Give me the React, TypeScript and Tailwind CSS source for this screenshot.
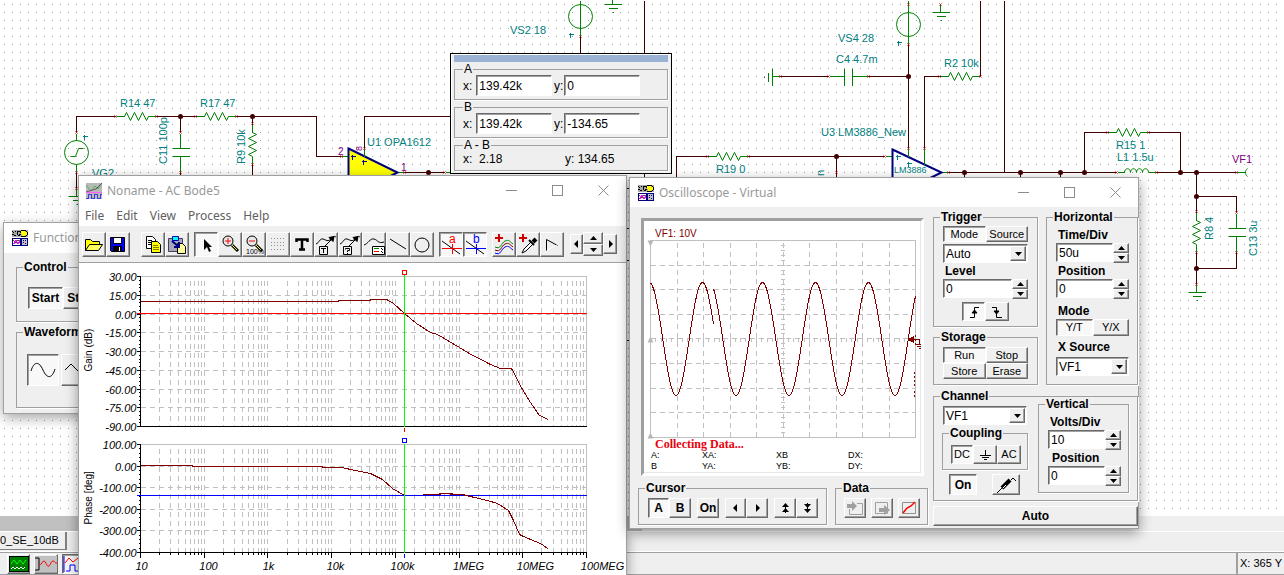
import React, { useId } from "react";
import clsx from "clsx";

const RAISED =
  "border border-t-white border-l-white border-r-[#696969] border-b-[#696969] shadow-[inset_-1px_-1px_0_#a0a0a0] bg-[#efefef]";
const SUNKEN =
  "border border-t-[#696969] border-l-[#696969] border-r-white border-b-white shadow-[inset_1px_1px_0_#a0a0a0]";

/* ---------- shared controls ---------- */

type BtnProps = {
  pressed?: boolean;
  className?: string;
  label?: string;
  children?: React.ReactNode;
};

const Btn = ({ pressed, className, label, children }: BtnProps) => (
  <button
    type="button"
    aria-label={label}
    aria-pressed={pressed}
    className={clsx(
      "flex items-center justify-center overflow-hidden whitespace-nowrap",
      pressed ? [SUNKEN, "bg-[#f8f8f8]"] : RAISED,
      className
    )}
  >
    {children}
  </button>
);

type GroupProps = {
  title: string;
  className?: string;
  legendClass?: string;
  children: React.ReactNode;
};

const Group = ({ title, className, legendClass, children }: GroupProps) => (
  <fieldset className={clsx("min-w-0 border border-[#a0a0a0] shadow-[1px_1px_0_#fff]", className)}>
    <legend className={clsx("leading-3 px-px", legendClass ?? "ml-1.5 text-xs font-bold")}>
      {title}
    </legend>
    {children}
  </fieldset>
);

const Arrow = ({ dir }: { dir: "up" | "down" | "left" | "right" }) => {
  const d = {
    up: "M0 6h7L3.5 2z",
    down: "M0 2h7L3.5 6z",
    left: "M5 0v8L1 4z",
    right: "M2 0v8L6 4z",
  }[dir];
  return (
    <svg width="7" height="8" viewBox="0 0 7 8" className="shrink-0">
      <path d={d} />
    </svg>
  );
};

const Spin = ({ label, value, indent }: { label: string; value: string; indent?: string }) => {
  const id = useId();
  return (
    <div>
      <label htmlFor={id} className={clsx("block h-4 text-xs leading-4 font-bold", indent ?? "pl-1")}>
        {label}
      </label>
      <div className="flex h-5">
        <input
          id={id}
          defaultValue={value}
          className={clsx("h-[19px] w-full min-w-0 flex-1 bg-white px-0.5 text-xs", SUNKEN)}
        />
        <div className="flex w-4 shrink-0 flex-col">
          <Btn label={`${label} up`} className="h-2.5">
            <Arrow dir="up" />
          </Btn>
          <Btn label={`${label} down`} className="h-2.5">
            <Arrow dir="down" />
          </Btn>
        </div>
      </div>
    </div>
  );
};

const Drop = ({ label, value, options }: { label: string; value: string; options: string[] }) => (
  <div className={clsx("relative h-[19px] bg-white", SUNKEN)}>
    <select
      aria-label={label}
      defaultValue={value}
      className="block h-full w-full appearance-none bg-transparent pr-4 pl-0.5 text-xs leading-4"
    >
      {options.map((o) => (
        <option key={o}>{o}</option>
      ))}
    </select>
    <span
      className={clsx(
        "pointer-events-none absolute inset-y-px right-px flex w-4 items-center justify-center",
        RAISED
      )}
    >
      <Arrow dir="down" />
    </span>
  </div>
);

const WindowButtons = () => (
  <div className="ml-auto flex h-full text-[#8c8c8c]">
    <button type="button" aria-label="Minimize" className="flex w-[46px] items-center justify-center">
      <svg width="11" height="11" stroke="currentColor" shapeRendering="crispEdges">
        <path d="M0 5.5h11" />
      </svg>
    </button>
    <button type="button" aria-label="Maximize" className="flex w-[46px] items-center justify-center">
      <svg width="11" height="11" stroke="currentColor" fill="none" shapeRendering="crispEdges">
        <path d="M.5.5h10v10h-10z" />
      </svg>
    </button>
    <button type="button" aria-label="Close" className="flex w-[46px] items-center justify-center">
      <svg width="11" height="11" stroke="currentColor">
        <path d="M.5.5l10 10M10.500.5l-10 10" />
      </svg>
    </button>
  </div>
);

const InstrumentIcon = () => (
  <svg width="16" height="16" viewBox="0 0 16 16" shapeRendering="crispEdges" className="shrink-0">
    <path d="M0 0h16v7H0z" fill="#a8a8a8" />
    <path d="M0 1h1v1H0zM1 2h1v1H1zM0 4h2v1H0zM2 5h2v1H2zM3 1h1v1H3zM5 1h3v1H5zM5 2h1v3H5zM7 4h2v1H7zM8 2h1v1H8zM6 5h2v1H6z" />
    <path d="M9 1h4v1h2v3h-2v1h-3z" fill="#ff0" />
    <path d="M9 0h5v1H9zM14 1h1v1h-1zM15 2h1v3h-1zM9 6h5v1H9zM14 5h1v1h-1zM8 1h1v1H8z" />
    <path d="M0 8h16v8H0z" fill="#000080" />
    <path d="M1 9h7v6H1z" fill="#fff" />
    <path d="M1 13h1v-2h1v-1h1v2h1v1h1v-1h1v-2h1" stroke="#f0f" fill="none" />
    <path d="M1 10.500h1M3 12.500h2M5 10.500h2" stroke="#008000" />
    <path d="M10 9h5v6h-5z" fill="#c0c0c0" />
    <path d="M11 10h1v1h-1zM13 10h1v1h-1zM11 12h1v1h-1zM13 13h1v1h-1z" fill="#000080" />
  </svg>
);

/* ---------- schematic ---------- */

const G = "#008000";
const W = "#400000";

const Res = ({ x, y, vertical }: { x: number; y: number; vertical?: boolean }) => (
  <g transform={`translate(${x} ${y})${vertical ? " rotate(90)" : ""}`} fill="none">
    <path d="M-8 0H0M24 0h8" stroke={G} shapeRendering="crispEdges" />
    <path d="M0 0l2-4 4 8 4-8 4 8 4-8 4 8 2-4" stroke={G} />
    <path d="M-10-1l2 2m0-2l-2 2M31-1l2 2m0-2l-2 2" stroke="#d00000" />
  </g>
);

const Ground = ({ x, y, rotate = 0 }: { x: number; y: number; rotate?: number }) => (
  <path
    transform={`translate(${x} ${y}) rotate(${rotate})`}
    d="M0-8V0M-8 0h17M-4 4h9M0 8h1"
    stroke={G}
    shapeRendering="crispEdges"
  />
);

const junctions = [
  [180, 116], [252, 116], [428, 172], [836, 156], [908, 76], [964, 172], [1020, 172],
  [1060, 172], [1084, 172], [1180, 172], [1196, 172], [1196, 196], [1196, 268],
];

const pins = [
  [76, 132], [76, 172], [76, 188], [180, 132], [180, 172], [341, 156], [364, 148], [404, 172],
  [444, 172], [580, 36], [780, 76], [828, 76], [868, 76], [908, 4], [908, 44], [940, 4], [908, 148],
  [924, 148], [884, 156], [948, 172], [1116, 172], [1156, 172], [1236, 172], [1236, 212],
  [1236, 252], [1196, 284], [836, 172],
];

const labels: [number, number, string][] = [
  [120, 107, "R14 47"], [200, 107, "R17 47"], [367, 146, "U1 OPA1612"], [92, 177, "VG2"],
  [510, 34, "VS2 18"], [838, 42, "VS4 28"], [836, 63, "C4 4.7m"], [944, 67, "R2 10k"],
  [821, 136, "U3 LM3886_New"], [716, 173, "R19 0"], [1116, 149, "R15 1"], [1117, 161, "L1 1.5u"],
];

const verticalLabels: [number, number, string][] = [
  [167, 164, "C11 100p"], [245, 164, "R9 10k"], [1213, 240, "R8 4"], [1257, 256, "C13 3u"],
  [824, 176, "n"],
];

const Schematic = () => (
  <svg className="absolute inset-0 h-full w-full" fontFamily="Liberation Sans, Arial, sans-serif" fontSize="11">
    <defs>
      <pattern id="dots" width="8" height="8" patternUnits="userSpaceOnUse">
        <path d="M4 4h1v1H4z" fill="#a0a0a0" />
      </pattern>
    </defs>
    <rect width="100%" height="100%" fill="url(#dots)" />
    <g transform="translate(.5 .5)">
      <g fill="none" stroke={W} shapeRendering="crispEdges">
        <path d="M76 132V116H115M156 116H196M236 116H316V156H340M76 172V188M180 116V132M180 172V180M252 116V124M252 164V180" />
        <path d="M364 148V116H452M404 172H444M580 36V54M644 0V180M676 180V156H708M748 156H884M836 156V180" />
        <path d="M780 76H828M868 76H908M908 44V148M924 148V76H940M980 0V76M1004 0V172" />
        <path d="M948 172H1116M1084 172V132H1108M1148 132H1180V172M1156 172H1236M964 172v8M1020 172v8M1060 172v8" />
        <path d="M1196 172V212M1196 196H1236V212M1236 252V268H1196M1196 252V284M620 188h12M620 228h12M620 260h12M620 340h12" />
      </g>
      <g fill="none" stroke={G} shapeRendering="crispEdges">
        <path d="M76 133V140M76 164V172M180 133V148M172 148H189M172 156H189M180 156V172" />
        <path d="M341 156h7M364 148v9M397 172h7M445 172h8M580 0V35M908 0V44M772 76h8" />
        <path d="M829 76H844M844 68V85M852 68V85M852 76H868M885 156h7M908 148v8M924 148v16M941 172h7" />
        <path d="M1117 172h7M1148 172h8M1236 172h9M1236 213V228M1228 228H1245M1228 236H1245M1236 236V252" />
      </g>
      <g fill="none" stroke={G}>
        <circle cx="76" cy="152" r="12" />
        <path d="M70 156h5l3-8h5" />
        <circle cx="580" cy="16" r="12" />
        <circle cx="908" cy="24" r="12" />
        <path d="M1124 172c0-5 6-5 6 0c0-5 6-5 6 0c0-5 6-5 6 0c0-5 6-5 6 0M1247 168c-3 3-3 5 0 8" />
      </g>
      <Res x={124} y={116} />
      <Res x={204} y={116} />
      <Res x={252} y={132} vertical />
      <Res x={716} y={156} />
      <Res x={948} y={76} />
      <Res x={1116} y={132} />
      <Res x={1196} y={220} vertical />
      <Ground x={76} y={196} />
      <Ground x={612} y={4} />
      <Ground x={940} y={12} />
      <Ground x={772} y={76} rotate={90} />
      <Ground x={1196} y={292} />
      {pins.map(([x, y]) => (
        <path key={`${x}-${y}`} d={`M${x - 1} ${y - 1}l2 2m0-2l-2 2`} stroke="#d00000" />
      ))}
      {junctions.map(([x, y]) => (
        <circle key={`${x}-${y}`} cx={x} cy={y} r="2.500" fill={W} />
      ))}
      <path d="M348 148L397 172L348 197z" fill="#ff0" stroke="#000080" strokeWidth="2" />
      <path d="M892 149L941 172L892 196z" fill="#fff" stroke="#000080" strokeWidth="2" />
      <path d="M364 150v6M908 150v6M924 150v14" stroke={G} shapeRendering="crispEdges" />
      <path d="M350 156h5M352 154v5M361 161h5M363 159v5" stroke="#000080" shapeRendering="crispEdges" />
      <path
        d="M82 136h5M84 134v5M568 34h5M570 32v5M896 42h5M898 40v5M895 156h5M897 154v5M906 163h5M908 161v5"
        stroke="#008080"
        shapeRendering="crispEdges"
      />
    </g>
    <g fill="#008080">
      {labels.map(([x, y, t]) => (
        <text key={t} x={x} y={y}>{t}</text>
      ))}
      {verticalLabels.map(([x, y, t]) => (
        <text key={t} transform={`translate(${x} ${y}) rotate(-90)`}>{t}</text>
      ))}
      <text x="894" y="173" fontSize="9">LM3886</text>
    </g>
    <g fill="#800080">
      <text x="1232" y="163">VF1</text>
      <text x="338" y="155" fontSize="10">2</text>
      <text x="401" y="171" fontSize="10">1</text>
      <text transform="translate(362 151) rotate(-90)" fontSize="9">8</text>
    </g>
  </svg>
);

/* ---------- function generator ---------- */

const FunctionWindow = () => (
  <section className="absolute top-[222px] left-[3px] flex h-48 w-64 flex-col border border-[#a0a0a0] bg-[#efefef] shadow-[0_4px_12px_rgba(0,0,0,0.35)]">
    <header className="flex h-[30px] shrink-0 items-center gap-[5px] bg-white pl-2">
      <InstrumentIcon />
      <h2 className="font-['Noto_Sans',sans-serif] text-xs text-[#999]">Function Generator</h2>
    </header>
    <div className="flex flex-col gap-1 px-3 pt-2">
      <Group title="Control" className="h-[61px]">
        <div className="flex px-[11px] pt-3.5 text-xs font-bold">
          <Btn pressed className="h-[22px] w-[35px]">Start</Btn>
          <Btn className="h-[22px] w-[35px]">Stop</Btn>
        </div>
      </Group>
      <Group title="Waveform" className="h-[82px]">
        <div className="flex gap-0.5 px-2.5 pt-4">
          <Btn pressed label="Sine" className="h-8 w-8">
            <svg width="26" height="18" fill="none" stroke="#000">
              <path d="M1 10C4 0 9 0 13 9S22 18 25 8" />
            </svg>
          </Btn>
          <Btn label="Triangle" className="h-8 w-8">
            <svg width="26" height="18" fill="none" stroke="#000">
              <path d="M1 9l6-6 12 12 6-6" />
            </svg>
          </Btn>
        </div>
      </Group>
    </div>
  </section>
);

/* ---------- AC Bode ---------- */

const X0 = 140;
const DECADE = 63.7;
const minors = [2, 3, 4, 5, 6, 7, 8, 9];
const gridX: number[] = [];
for (let d = 0; d < 7; d++) {
  if (d > 0) gridX.push(Math.round(X0 + d * DECADE));
  minors.forEach((m) => gridX.push(Math.round(X0 + (d + Math.log10(m)) * DECADE)));
}

const gainTicks = ["30.00", "15.00", "0.00", "-15.00", "-30.00", "-45.00", "-60.00", "-75.00", "-90.00"];
const phaseTicks = ["100.00", "0.00", "-100.00", "-200.00", "-300.00", "-400.00"];
const freqTicks: [number, string][] = [
  [141, "10"], [208, "100"], [268, "1k"], [335, "10k"], [402, "100k"], [468, "1MEG"], [535, "10MEG"], [602, "100MEG"],
];

const Grid = ({ top, bottom, ticks }: { top: number; bottom: number; ticks: string[] }) => {
  const step = (bottom - top) / (ticks.length - 1);
  return (
    <g>
      <g stroke="#c0c0c0" fill="none" shapeRendering="crispEdges">
        <path strokeDasharray="5 4" d={gridX.map((x) => `M${x} ${top + 4}V${bottom}`).join("")} />
        <path
          strokeDasharray="5 4"
          d={ticks.slice(1, -1).map((_, i) => `M${X0} ${Math.round(top + (i + 1) * step)}H586`).join("")}
        />
        <path d={`M${X0} ${top}H586V${bottom}`} />
      </g>
      <g stroke="#000" shapeRendering="crispEdges">
        <path d={`M${X0} ${top}V${bottom}H586`} fill="none" />
        {ticks.map((t, i) => (
          <path key={t} d={`M${X0 - 4} ${Math.round(top + i * step)}h4`} />
        ))}
        {ticks.slice(1).map((t, i) =>
          [1, 2, 3, 4].map((k) => (
            <path key={`${t}-${k}`} d={`M${X0 - 2} ${Math.round(top + (i + k / 5) * step)}h2`} />
          ))
        )}
      </g>
      {ticks.map((t, i) => (
        <text key={t} x="136" y={Math.round(top + i * step) + 4} textAnchor="end" fontStyle="italic">
          {t}
        </text>
      ))}
    </g>
  );
};

const BodePlot = () => (
  <svg className="min-h-0 w-full flex-1" fontFamily="Liberation Sans, Arial, sans-serif" fontSize="11">
    <g transform="translate(-78.500 -262.500)">
      <Grid top={276} bottom={426} ticks={gainTicks} />
      <Grid top={444} bottom={552} ticks={phaseTicks} />
      <path
        d={gridX.map((x) => `M${x} 552v2`).join("") + [0, 1, 2, 3, 4, 5, 6, 7].map((d) => `M${Math.round(X0 + d * DECADE)} 552v5`).join("")}
        stroke="#000"
        shapeRendering="crispEdges"
      />
      {freqTicks.map(([x, t]) => (
        <text key={t} x={x} y="569" textAnchor="middle" fontStyle="italic">{t}</text>
      ))}
      <text transform="translate(91 371) rotate(-90)" fontSize="10">Gain (dB)</text>
      <text transform="translate(91 524) rotate(-90)" fontSize="10">Phase [deg]</text>
      <g fill="none" stroke="#800000" shapeRendering="crispEdges">
        <path d="M140 301H338V300H370V299H386L393 303L404 313L416 323L430 332L437 334L459 347L467 352L490 364L500 368H511L522 389L530 402L539 415L548 419" />
        <path d="M140 465H192V466H322V467H341L355 470L370 473L382 479L392 488L404 495H422L444 493L460 494" />
      </g>
      <path d="M136 313H586" stroke="#f00" shapeRendering="crispEdges" />
      <path d="M136 495H586" stroke="#00f" shapeRendering="crispEdges" />
      <path
        d="M422 494H440V493H450V494H462L474 497L487 500L497 503L508 510L513 520L519 534L523 536L535 541L542 544L548 549"
        fill="none"
        stroke="#800000"
        shapeRendering="crispEdges"
      />
      <g fill="none" shapeRendering="crispEdges">
        <path d="M404 274V426M404 443V552" stroke="#0f0" />
        <path d="M402 270h4v4h-4zM404 427v4" stroke="#f00" />
        <path d="M402 438h4v4h-4zM404 553v4" stroke="#00f" />
      </g>
    </g>
  </svg>
);

const Tool = ({ label, pressed, children }: { label: string; pressed?: boolean; children: React.ReactNode }) => (
  <Btn label={label} pressed={pressed} className="h-[25px] w-6 shrink-0">
    <svg width="22" height="22" viewBox="0 0 22 22" fill="none" stroke="#000" className="shrink-0">
      {children}
    </svg>
  </Btn>
);

const Lens = () => (
  <>
    <circle cx="9" cy="8" r="5" fill="#e8e8e8" />
    <path d="M13 12l6 6" strokeWidth="3" />
    <path d="M13 12l5 5" stroke="#ff0" />
  </>
);

const Probe = () => (
  <>
    <path d="M1 11c3-1 4-6 7-5s5 3 8 0 3-3 5-2M10 13l8-8" />
    <path d="M19 3.500l-1 5-4-4z" fill="#000" />
  </>
);

const BodeToolbar = () => (
  <div className="flex h-[37px] shrink-0 items-center border-b border-b-[#a0a0a0] bg-[#efefef] pl-[3px]">
    <Tool label="Open">
      <path d="M2.500 17.500v-11h5l2 2h7v3" fill="#ff0" />
      <path d="M2.500 17.500l4-6h13l-4 6z" fill="#ffff60" />
    </Tool>
    <Tool label="Save">
      <path d="M3.500 4.500h14v14h-13l-1-1z" fill="#00f" />
      <path d="M6.500 4.500h8v6h-8z" fill="#fff" />
      <path d="M6.500 13.500h8v5h-8z" fill="#000" />
      <path d="M12.500 14v4" stroke="#fff" />
    </Tool>
    <div className="w-[11px]" />
    <Tool label="Copy">
      <path d="M4.500 3.500h6l3 3v9h-9z" fill="#fff" />
      <path d="M6 7.500h4M6 9.500h3M6 11.500h3" />
      <path d="M9.500 8.500h6l3 3v8h-9z" fill="#ff0" />
      <path d="M11 12.500h5M11 14.500h6M11 16.500h6" stroke="#808000" />
    </Tool>
    <Tool label="Paste">
      <path d="M2.500 5.500h14v13h-14z" fill="#a8a8b8" stroke="#404060" />
      <path d="M6.500 3.500h6v4h-6z" fill="#0ff" stroke="#0000c0" />
      <path d="M11.500 10.500h5l3 3v7h-8z" fill="#ffffa0" />
      <path d="M6 8l7 6m0-5v5H8" stroke="#000080" strokeWidth="2" />
    </Tool>
    <div className="w-[5px]" />
    <Tool label="Select" pressed>
      <path d="M9 6v11l3-3 2 5 2-1-2-4h3z" fill="#000" stroke="none" />
    </Tool>
    <Tool label="Zoom in">
      <Lens />
      <path d="M6 8h6M9 5v6" stroke="#f00" />
    </Tool>
    <Tool label="Zoom out">
      <Lens />
      <path d="M6 8h6" stroke="#f00" />
      <text x="3" y="21" fontSize="7" fill="#000" stroke="none" fontFamily="Liberation Sans, sans-serif">100%</text>
    </Tool>
    <Tool label="Grid">
      <path d="M4 5.500h14M4 9.500h14M4 12.500h14M4 16.500h14" stroke="#909090" strokeDasharray="1 2" />
    </Tool>
    <Tool label="Text">
      <path d="M5.500 9V6.500h11V9M11 6v10M8 16.500h6" strokeWidth="2.500" />
    </Tool>
    <Tool label="Text probe">
      <Probe />
      <path d="M4.500 13.500h8v8h-8z" fill="#efefef" />
      <path d="M6 15.500h5M8.500 15v5" />
    </Tool>
    <Tool label="Query probe">
      <Probe />
      <path d="M4.500 13.500h8v8h-8z" fill="#efefef" />
      <path d="M6.500 16.500v-1h4v2h-2v1.500M8.500 20v1" />
    </Tool>
    <Tool label="Legend">
      <path d="M1 12c4-1 6-7 10-6s4 5 10 3" />
      <path d="M9.500 13.500h12v8h-12z" fill="#fff" />
      <path d="M11 15.500h5" stroke="#080" />
      <path d="M11 18.500h5" stroke="#f00" />
      <path d="M18 15l2 2M18 18l2 2" />
    </Tool>
    <Tool label="Line">
      <path d="M3 6l16 10" />
    </Tool>
    <Tool label="Ellipse">
      <circle cx="11" cy="12" r="7" />
    </Tool>
    <div className="w-[5px]" />
    <Tool label="Cursor a" pressed>
      <path d="M2 8l18 13" />
      <path d="M2 15.500h20M12.500 11v10" stroke="#f00" />
      <text x="9" y="10" fontSize="12" fill="#f00" stroke="none" fontFamily="Liberation Sans, sans-serif">a</text>
    </Tool>
    <Tool label="Cursor b" pressed>
      <path d="M2 8l18 13" />
      <path d="M2 15.500h20M12.500 11v10" stroke="#00f" />
      <text x="9" y="10" fontSize="12" fill="#00f" stroke="none" fontFamily="Liberation Sans, sans-serif">b</text>
    </Tool>
    <div className="w-[5px]" />
    <Tool label="Add curves">
      <path d="M6 1v8M2 5h8" stroke="#d00000" strokeWidth="2" />
      <path d="M2 14c6 3 6-4 10-6s5 1 8 3" stroke="#080" />
      <path d="M2 17c6 3 6-4 10-6s5 1 8 3" stroke="#800000" />
      <path d="M2 20c6 3 6-4 10-6s5 1 8 3" stroke="#00f" />
    </Tool>
    <Tool label="Add probe">
      <path d="M6 1v8M2 5h8" stroke="#d00000" strokeWidth="2" />
      <path d="M5 20l2-4 7-7 2 2-7 7z" fill="#fff" />
      <path d="M16 9l3-3" strokeWidth="4" />
      <path d="M12 7l5 5" strokeWidth="2" />
    </Tool>
    <Tool label="Play">
      <path d="M5.500 17.500v-11l11 6" />
      <path d="M16 12l-10 5" stroke="#fff" />
    </Tool>
    <div className="w-1.5" />
    <Btn label="Scroll left" className="h-5 w-[13px] shrink-0">
      <Arrow dir="left" />
    </Btn>
    <div className="flex shrink-0 flex-col">
      <Btn label="Scroll up" className="h-3 w-5"><Arrow dir="up" /></Btn>
      <Btn label="Scroll down" className="h-3 w-5"><Arrow dir="down" /></Btn>
    </div>
    <Btn label="Scroll right" className="h-5 w-[14px] shrink-0">
      <Arrow dir="right" />
    </Btn>
  </div>
);

const BodeWindow = () => (
  <section className="absolute top-[175px] bottom-0 left-[78px] flex w-[549px] flex-col border-t border-r border-l border-[#a0a0a0] bg-white shadow-[0_4px_12px_rgba(0,0,0,0.4)]">
    <header className="flex h-[29px] shrink-0 items-center gap-[5px] pl-[7px]">
      <svg width="16" height="16" shapeRendering="crispEdges" className="shrink-0">
        <path d="M0 0h16v16H0z" fill="#b8b8b8" />
        <path d="M0 2l5 6 4-5 3 3 4-6" fill="none" stroke="#40c040" shapeRendering="auto" />
        <path d="M0 9L10 6l6-6" fill="none" stroke="#804080" shapeRendering="auto" />
        <path d="M0 9.500h16" stroke="#ff60ff" />
        <path d="M0 15.500h2.500v-4h3v4h3v-4h3v4h3v-4H16" fill="none" stroke="#4040e0" />
      </svg>
      <h2 className="font-['Noto_Sans',sans-serif] text-xs text-[#999]">Noname - AC Bode5</h2>
      <WindowButtons />
    </header>
    <nav className="flex h-[21px] shrink-0 items-center gap-3 pl-1.5 font-['Noto_Sans',sans-serif] text-xs text-[#606060]">
      {["File", "Edit", "View", "Process", "Help"].map((m) => (
        <button type="button" key={m}>{m}</button>
      ))}
    </nav>
    <BodeToolbar />
    <BodePlot />
  </section>
);

/* ---------- cursor read-out ---------- */

const CursorRow = ({ title, x, y }: { title: string; x: string; y: string }) => (
  <Group title={title} className="h-[37px]" legendClass="ml-2 text-xs">
    <div className="flex items-center pl-2 text-xs">
      <label className="flex w-[91px] items-center gap-1">
        x:
        <input defaultValue={x} className={clsx("h-[21px] w-19 bg-white px-0.5", SUNKEN)} />
      </label>
      <label className="flex items-center gap-px">
        y:
        <input defaultValue={y} className={clsx("h-[21px] w-19 bg-white px-0.5", SUNKEN)} />
      </label>
    </div>
  </Group>
);

const CursorPanel = () => (
  <section
    aria-label="Cursors"
    className="absolute top-[53px] left-[450px] flex w-[222px] flex-col gap-px border border-black bg-[#efefef] px-[3px] pt-px pb-0.5 shadow-[inset_1px_1px_0_#fff]"
  >
    <div className="h-[7px] bg-[#9ab2d4]" />
    <CursorRow title="A" x="139.42k" y="0" />
    <CursorRow title="B" x="139.42k" y="-134.65" />
    <Group title="A - B" className="h-8" legendClass="ml-2 text-xs">
      <div className="flex pl-2 text-xs leading-4">
        <span className="flex-1">x:&nbsp; 2.18</span>
        <span className="flex-1">y: 134.65</span>
      </div>
    </Group>
  </section>
);

/* ---------- oscilloscope ---------- */

const trace = (from: number, to: number, peak: number) => {
  const pts: string[] = [];
  for (let x = from; x <= to; x++) {
    pts.push(`${x},${(338.5 - 56.5 * Math.cos((2 * Math.PI * (x - peak)) / 53)).toFixed(1)}`);
  }
  return pts.join(" ");
};

const cols = [1, 2, 3, 4, 5, 6, 7, 8, 9].map((i) => Math.round(650 + i * 26.5));
const rows = [1, 2, 3, 4, 5, 6, 7].map((i) => Math.round(240 + i * 24.6));
const xTicks = Array.from({ length: 50 }, (_, i) => Math.round(650 + i * 5.3));
const yTicks = Array.from({ length: 40 }, (_, i) => Math.round(240 + i * 4.92));

const ScopeScreen = () => (
  <div className="mt-[7px] mr-1 ml-[3px] flex h-[258px] flex-col border-3 border-t-[#a0a0a0] border-r-white border-b-white border-l-[#a0a0a0] bg-white shadow-[inset_-1px_-1px_0_#e8e8e8]">
    <p className="h-[19px] pt-[5px] pl-[11px] text-[10px] leading-4 text-[#800000]">VF1: 10V</p>
    <svg className="h-[199px] w-full shrink-0" fill="none">
      <g transform="translate(-643.500 -239.500)">
        <g stroke="#c0c0c0" shapeRendering="crispEdges">
          <path d="M650 240H915V437H650z" />
          <path strokeDasharray="5 4" d={cols.map((x) => `M${x} 242V437`).join("")} />
          <path strokeDasharray="5 4" d={rows.map((y) => `M650 ${y}H915`).join("")} />
          <path d={xTicks.map((x) => `M${x} 337v4`).join("") + yTicks.map((y) => `M780 ${y}h4`).join("")} />
        </g>
        <path d="M647 240h6l-3 6zM647 438h6l-3-6zM647 342h6l-3-6z" fill="#b8b8b8" />
        <g stroke="#800000" shapeRendering="crispEdges">
          <polyline points={trace(650, 713, 649)} />
          <polyline points={trace(713, 915, 709)} />
          <path d="M914 371v14M914 390v6M915 334v12" strokeDasharray="2 2" />
          <path d="M908 339H919V344M914 344h10M916 346h6M918 348h2" />
          <path d="M908 339l5-3v6z" fill="#800000" />
        </g>
      </g>
    </svg>
    <p className="h-[11px] pl-[11px] font-['Liberation_Serif',serif] text-xs leading-[11px] font-bold text-red-600">
      Collecting Data...
    </p>
    <div className="grid grid-cols-[51px_74px_72px_1fr] pl-[7px] text-[9px] leading-[11px]">
      {["A:", "XA:", "XB", "DX:", "B", "YA:", "YB:", "DY:"].map((t) => (
        <span key={t}>{t}</span>
      ))}
    </div>
  </div>
);

const DoubleArrow = ({ flip }: { flip?: boolean }) => (
  <svg width="9" height="10" className={flip ? "rotate-180" : ""}>
    <path d="M4.500 0L8 4H1zM4.500 5L8 9H1zM4 3h1v7H4z" />
  </svg>
);

const OscilloscopeWindow = () => (
  <section className="absolute top-[177px] left-[629px] flex w-[510px] flex-col border border-[#a0a0a0] bg-[#efefef] shadow-[0_4px_12px_rgba(0,0,0,0.4)]">
    <header className="flex h-[29px] items-center gap-[5px] bg-white pl-2">
      <InstrumentIcon />
      <h2 className="font-['Noto_Sans',sans-serif] text-xs text-[#999]">Oscilloscope - Virtual</h2>
      <WindowButtons />
    </header>
    <div className="flex gap-[5px] pt-1 pb-0.5 pl-2 text-[11px]">
      <div className="flex w-[290px] shrink-0 flex-col gap-1.5">
        <ScopeScreen />
        <div className="flex gap-2">
          <Group title="Cursor" className="h-[43px] w-[189px]">
            <div className="flex pt-1 pl-[9px] text-xs font-bold">
              <Btn pressed className="h-5 w-[21px]">A</Btn>
              <Btn className="h-5 w-[22px]">B</Btn>
              <Btn className="ml-1.5 h-5 w-[22px]">On</Btn>
              <Btn label="Left" className="ml-1.5 h-5 w-[21px]"><Arrow dir="left" /></Btn>
              <Btn label="Right" className="h-5 w-[22px]"><Arrow dir="right" /></Btn>
              <Btn label="Up" className="ml-1.5 h-5 w-[22px]"><DoubleArrow /></Btn>
              <Btn label="Down" className="h-5 w-[22px]"><DoubleArrow flip /></Btn>
            </div>
          </Group>
          <Group title="Data" className="h-[43px] flex-1">
            <div className="flex gap-[5px] pt-1 pl-2">
              <Btn label="Import" className="h-5 w-[22px]">
                <svg width="18" height="16" fill="none" stroke="#a0a0a0">
                  <path d="M3.500 9v5.500h13v-11H11" />
                  <path d="M1 4h5V1l5 5-5 5V8H1z" fill="#a0a0a0" stroke="none" />
                </svg>
              </Btn>
              <Btn label="Export" className="h-5 w-[22px]">
                <svg width="18" height="16" fill="none" stroke="#a0a0a0">
                  <path d="M2.500 2.500h12v11h-12z" />
                  <path d="M6 8h5V5l6 5-6 5v-3H6z" fill="#a0a0a0" stroke="none" />
                </svg>
              </Btn>
              <Btn label="Curve" className="h-5 w-[22px]">
                <svg width="16" height="14" fill="none">
                  <path d="M1.500 1.500h13v11h-13z" stroke="#909090" />
                  <path d="M2 12l4-5 4-2 4-4" stroke="#f00" strokeWidth="1.500" />
                </svg>
              </Btn>
            </div>
          </Group>
        </div>
      </div>

      <div className="flex min-w-0 flex-1 flex-col">
        <div className="flex gap-2">
          <div className="flex w-[105px] shrink-0 flex-col gap-1">
            <Group title="Trigger" className="h-[116px]">
              <div className="flex flex-col px-[9px] pt-[3px]">
                <div className="mb-0.5 grid grid-cols-2">
                  <Btn pressed className="h-4">Mode</Btn>
                  <Btn className="h-4">Source</Btn>
                </div>
                <Drop label="Trigger mode" value="Auto" options={["Auto", "Normal", "Single"]} />
                <Spin label="Level" value="0" indent="pl-0.5" />
                <div className="mt-[3px] flex justify-center">
                  <Btn pressed label="Rising edge" className="h-[19px] w-[23px]">
                    <svg width="12" height="12" fill="none" stroke="#000">
                      <path d="M2 11.500h4.500V1.500H11" />
                      <path d="M4 7h5L6.500 4z" fill="#000" />
                    </svg>
                  </Btn>
                  <Btn label="Falling edge" className="h-[19px] w-6">
                    <svg width="12" height="12" fill="none" stroke="#000">
                      <path d="M1 1.500h4.500v10H11" />
                      <path d="M3 5h5L5.500 8z" fill="#000" />
                    </svg>
                  </Btn>
                </div>
              </div>
            </Group>
            <Group title="Storage" className="h-[54px]">
              <div className="grid grid-cols-2 px-[9px] pt-1">
                <Btn pressed className="h-4">Run</Btn>
                <Btn className="h-4">Stop</Btn>
                <Btn className="h-4">Store</Btn>
                <Btn className="h-4">Erase</Btn>
              </div>
            </Group>
          </div>
          <Group title="Horizontal" className="h-[174px] flex-1">
            <div className="flex flex-col pt-1 pr-2 pl-[9px]">
              <Spin label="Time/Div" value="50u" indent="pl-0.5" />
              <Spin label="Position" value="0" indent="pl-0.5" />
              <p className="mt-1 h-4 pl-0.5 text-xs leading-4 font-bold">Mode</p>
              <div className="grid grid-cols-2">
                <Btn pressed className="h-[17px]">Y/T</Btn>
                <Btn className="h-[17px]">Y/X</Btn>
              </div>
              <p className="mt-[3px] mb-0.5 h-4 pl-0.5 text-xs leading-4 font-bold">X Source</p>
              <Drop label="X Source" value="VF1" options={["VF1", "VG2"]} />
            </div>
          </Group>
        </div>
        <Group title="Channel" className="mt-[5px] h-[111px]">
          <div className="flex gap-2.5 pr-2 pl-2">
            <div className="w-[86px] shrink-0 pt-1">
              <div className="px-px">
                <Drop label="Channel" value="VF1" options={["VF1", "VG2"]} />
              </div>
              <Group title="Coupling" className="mt-0.5 h-[43px]">
                <div className="flex pt-1.5 pl-2">
                  <Btn pressed className="h-[19px] w-[22px]">DC</Btn>
                  <Btn label="Ground coupling" className="h-[19px] w-6">
                    <svg width="12" height="12" stroke="#000" shapeRendering="crispEdges">
                      <path d="M6.500 1v5M1 6.500h11M3 8.500h7M5 10.500h3" />
                    </svg>
                  </Btn>
                  <Btn className="h-[19px] w-6">AC</Btn>
                </div>
              </Group>
              <div className="mt-1 flex gap-[15px] pl-[7px] text-xs font-bold">
                <Btn pressed className="h-[21px] w-7">On</Btn>
                <Btn label="Probe" className="h-[21px] w-7">
                  <svg width="20" height="18" stroke="#000" fill="none">
                    <path d="M1 17l5-5M15 4l2-2 3 3" />
                    <path d="M6 12l8-8" strokeWidth="4" />
                    <path d="M7 12l3-3" stroke="#fff" />
                  </svg>
                </Btn>
              </div>
            </div>
            <Group title="Vertical" className="-mt-1 h-[95px] flex-1">
              <div className="pt-1 pr-[7px] pl-[9px]">
                <Spin label="Volts/Div" value="10" indent="pl-0.5" />
                <Spin label="Position" value="0" />
              </div>
            </Group>
          </div>
        </Group>
        <Btn className="mt-[5px] h-5 text-xs font-bold">Auto</Btn>
      </div>
    </div>
  </section>
);

/* ---------- main window bottom ---------- */

const BottomBars = () => (
  <footer className="flex h-[59px] shrink-0 flex-col bg-[#efefef]">
    <div className="flex h-[15px]">
      <div className="w-1/2 bg-[#c0c0c0]" />
    </div>
    <div className="flex h-[20px] border-t border-t-white">
      <button type="button" className="h-[18px] border-r-2 border-b border-r-[#808080] border-b-[#808080] pr-1.5 text-[11px]">
        0_SE_10dB
      </button>
    </div>
    <div className="flex flex-1 items-stretch border-t border-b border-t-white border-b-[#a0a0a0]">
      <div className="flex flex-1 items-center gap-1 border-t border-t-[#a0a0a0] pl-[7px]">
        <Btn label="Schematic" className="h-5 w-[23px]">
          <svg width="20" height="16" fill="none">
            <path d="M0 0h20v16H0z" fill="#008000" stroke="#000" strokeWidth="2" />
            <path d="M2 8l3-4 3 4 3-4 3 4 3-4" stroke="#0f0" />
            <path d="M2 13l2-2 2 2 2-2 2 2 2-2 2 2 2-2" stroke="#fff" />
          </svg>
        </Btn>
        <Btn label="Signal" className="h-5 w-6">
          <svg width="22" height="16" fill="none">
            <path d="M0 0h22v16H0z" fill="#c0c0c0" />
            <path d="M0 2h4v12H0" stroke="#000" />
            <path d="M4 9c3 0 3-4 5-4s3 7 5 5 2-5 4-5 2 3 4 2" stroke="#f00" />
          </svg>
        </Btn>
        <Btn pressed label="Diagram" className="h-5 w-6">
          <svg width="22" height="16" fill="none">
            <path d="M1 0v16M3 15h4V9h5v6h5V9h4" stroke="#00f" />
            <path d="M2 7l4-5 4 4 5-4 5 3" stroke="#f00" />
          </svg>
        </Btn>
      </div>
      <output className="w-12 overflow-hidden border-t border-l-2 border-t-[#a0a0a0] border-l-[#a0a0a0] pl-0.5 text-[11px] leading-5 whitespace-nowrap">
        X: 365 Y
      </output>
    </div>
  </footer>
);

const App = () => {
  return (
    <main className="relative flex h-screen flex-col overflow-hidden bg-white font-['Liberation_Sans',Arial,sans-serif] text-black">
      <div className="relative min-h-0 flex-1">
        <Schematic />
      </div>
      <BottomBars />
      <FunctionWindow />
      <BodeWindow />
      <OscilloscopeWindow />
      <CursorPanel />
    </main>
  );
};

export default App;
